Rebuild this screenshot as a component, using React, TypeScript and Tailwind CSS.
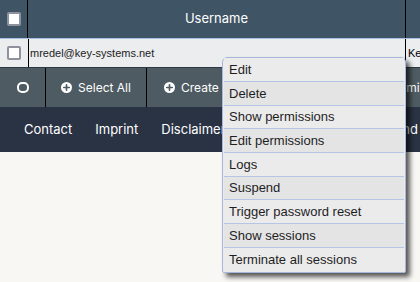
import React from "react";

const menuItems: [string, string][] = [
  ["Edit", "h-[24px]"],
  ["Delete", "h-[24px]"],
  ["Show permissions", "h-[23px]"],
  ["Edit permissions", "h-[24px]"],
  ["Logs", "h-[24px]"],
  ["Suspend", "h-[23px]"],
  ["Trigger password reset", "h-[24px]"],
  ["Show sessions", "h-[24px]"],
  ["Terminate all sessions", "h-[23px]"],
];

function PlusCircle() {
  return (
    <svg width="11" height="11" viewBox="0 0 12 12" className="shrink-0">
      <circle cx="6" cy="6" r="6" fill="#ffffff" />
      <path d="M6 3v6M3 6h6" stroke="#4e5b62" strokeWidth="1.8" strokeLinecap="round" />
    </svg>
  );
}

function Checkbox() {
  return <div className="w-[14px] h-[14px] bg-white border-[2px] border-[#8e929c] rounded-[2px]" />;
}

export default function App() {
  return (
    <div className="relative w-[420px] h-[282px] overflow-hidden bg-[#f8f7f4]" style={{ fontFamily: "Inter, 'Noto Sans', sans-serif" }}>
      {/* Table header */}
      <div className="flex h-[38px] bg-[#3f5465] w-[600px]">
        <div className="w-[28px] flex items-center justify-center border-r border-black">
          <Checkbox />
        </div>
        <div className="w-[378px] flex items-center justify-center text-white text-[13px] border-r border-black">
          Username
        </div>
        <div className="flex-1" />
      </div>
      <div className="h-px bg-[#a9c1e0] w-[600px]" />
      {/* Row */}
      <div className="flex h-[28px] bg-[#ecedef] w-[600px]" style={{ fontFamily: "'Liberation Sans', Arial, sans-serif" }}>
        <div className="w-[29px] flex items-center justify-center border-r border-black">
          <Checkbox />
        </div>
        <div className="w-[377px] flex items-center pl-[1px] text-[11px] text-[#222] border-r border-black">
          mredel@key-systems.net
        </div>
        <div className="flex-1 flex items-center pl-[2px] text-[11px] text-black">Key-Systems</div>
      </div>
      {/* Action bar */}
      <div className="flex h-[40px] bg-[#4e5b62] text-white text-[12px] w-[600px] border-t border-[#2f3a40]">
        <div className="w-[46px] flex items-center justify-center border-r border-black">
          <div className="w-[12px] h-[11px] rounded-[5px] border-[2px] border-white" />
        </div>
        <div className="w-[101px] flex items-center justify-center gap-[6px] border-r border-black">
          <PlusCircle />
          <span>Select All</span>
        </div>
        <div className="w-[160px] flex items-center pl-[17px] gap-[6px] border-r border-black">
          <PlusCircle />
          <span>Create user</span>
        </div>
        <div className="flex-1 flex items-center pl-[80px]">
          <span>Permissions</span>
        </div>
      </div>
      {/* Footer nav */}
      <div className="flex items-center h-[45px] bg-[#2a3344] text-white text-[13px] pl-[24px] gap-[23px]">
        <span>Contact</span>
        <span>Imprint</span>
        <span>Disclaimer</span>
        <span className="flex-1" />
        <span className="mr-[2px]">Background</span>
      </div>

      {/* Context menu */}
      <div
        className="absolute left-[222px] top-[57px] w-[184px] bg-[#ebebec] border border-[#a8b8dc] rounded-t-[5px] rounded-b-[2px] px-[1px] pb-[1px] shadow-[4px_4px_5px_rgba(0,0,0,0.65)]"
        style={{ fontFamily: "'Liberation Sans', Arial, sans-serif" }}
      >
        {menuItems.map(([item, h], i) => (
          <div
            key={item}
            className={
              h +
              " flex items-center pl-[5px] text-[13px] text-[#1e1e1e] " +
              (i < menuItems.length - 1 ? "border-b border-[#b6c4e6] " : "") +
              (i % 2 === 1 ? "bg-[#e4e4e5]" : "bg-[#ebebec]")
            }
          >
            {item}
          </div>
        ))}
      </div>
    </div>
  );
}
